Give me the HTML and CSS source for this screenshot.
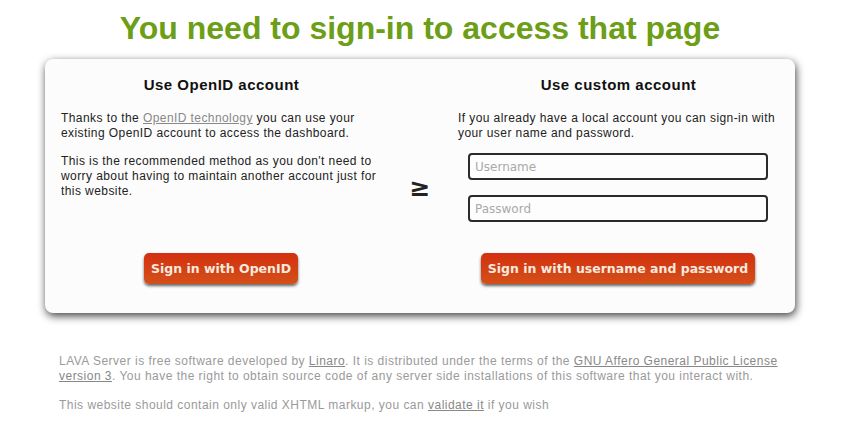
FILE: index.html
```html
<!DOCTYPE html>
<html>
<head>
<meta charset="utf-8">
<title>Sign in</title>
<link rel="stylesheet" href="styles.css">
</head>
<body>
<div class="wrap">
  <h1 class="title">You need to sign-in to access that page</h1>
  <div class="card">
    <div class="col">
      <h2 class="col-head">Use OpenID account</h2>
      <p class="txt">Thanks to the <a href="#">OpenID technology</a> you can use your existing OpenID account to access the dashboard.</p>
      <p class="txt">This is the recommended method as you don't need to worry about having to maintain another account just for this website.</p>
      <div class="btn-row"><button class="btn">Sign in with OpenID</button></div>
    </div>
    <div class="mid">&ge;</div>
    <div class="col">
      <h2 class="col-head">Use custom account</h2>
      <p class="txt">If you already have a local account you can sign-in with your user name and password.</p>
      <div class="fields">
        <input class="field" type="text" placeholder="Username">
        <input class="field" type="password" placeholder="Password">
      </div>
      <div class="btn-row"><button class="btn">Sign in with username and password</button></div>
    </div>
  </div>
  <div class="footer">
    <p class="foot">LAVA Server is free software developed by <a href="#">Linaro</a>. It is distributed under the terms of the <a href="#">GNU Affero General Public License version 3</a>. You have the right to obtain source code of any server side installations of this software that you interact with.</p>
    <p class="foot">This website should contain only valid XHTML markup, you can <a href="#">validate it</a> if you wish</p>
  </div>
</div>
</body>
</html>
```
FILE: styles.css
```css
html, body {
  margin: 0;
  padding: 0;
  background: #ffffff;
}
.wrap {
  width: 750px;
  margin: 0 0 0 45px;
}
.title {
  margin: 0;
  padding: 9px 0 0;
  height: 50px;
  text-align: center;
  font-family: "Liberation Sans", Arial, sans-serif;
  font-weight: bold;
  font-size: 32px;
  line-height: 38px;
  color: #6c9e17;
}
.card {
  display: grid;
  grid-template-columns: 321px 76px 321px;
  padding: 0 16px;
  height: 254px;
  background: #fcfcfc;
  border-radius: 8px;
  box-shadow: 1px 3px 9px rgba(0,0,0,0.75);
}
.col {
  display: flex;
  flex-direction: column;
  font-family: "Liberation Sans", Arial, sans-serif;
  color: #222;
}
.col-head {
  margin: 16px 0 0;
  font-size: 15px;
  line-height: 19px;
  font-weight: bold;
  text-align: center;
  letter-spacing: 0.5px;
  color: #111;
}
.txt {
  margin: 17px 0 0;
  font-size: 12px;
  line-height: 15px;
  letter-spacing: 0.42px;
}
.txt + .txt {
  margin-top: 13px;
}
.txt a {
  color: #888;
}
.mid {
  display: flex;
  align-items: center;
  justify-content: center;
  padding-top: 2px;
  font-family: "DejaVu Sans", sans-serif;
  font-weight: bold;
  font-size: 25px;
  color: #222;
}
.fields {
  display: flex;
  flex-direction: column;
  align-items: center;
  gap: 15px;
  margin-top: 12px;
}
.field {
  box-sizing: border-box;
  width: 300px;
  height: 27px;
  margin: 0 0 0 -1px;
  padding: 0 5px;
  border: 2px solid #2a2a2a;
  border-radius: 4px;
  background: #fdfdfd;
  font-family: "DejaVu Sans", sans-serif;
  font-size: 12px;
  color: #333;
}
.field::placeholder {
  color: #a9a9a9;
}
.btn-row {
  margin-top: auto;
  margin-bottom: 29px;
  display: flex;
  justify-content: center;
}
.btn {
  height: 31px;
  padding: 0 7px;
  border: none;
  border-radius: 5px;
  background: linear-gradient(#d3300f, #d4501a);
  box-shadow: 0 2px 3px rgba(0,0,0,0.6);
  font-family: "DejaVu Sans", sans-serif;
  font-weight: bold;
  font-size: 12.5px;
  color: #f6eadf;
  margin-left: -1px;
}
.footer {
  padding: 41px 14px 0;
}
.foot {
  margin: 0 0 14px;
  font-family: "Liberation Sans", Arial, sans-serif;
  font-size: 12px;
  line-height: 15px;
  color: #9a9a9a;
  letter-spacing: 0.48px;
}
.foot a {
  color: #888;
}
```
